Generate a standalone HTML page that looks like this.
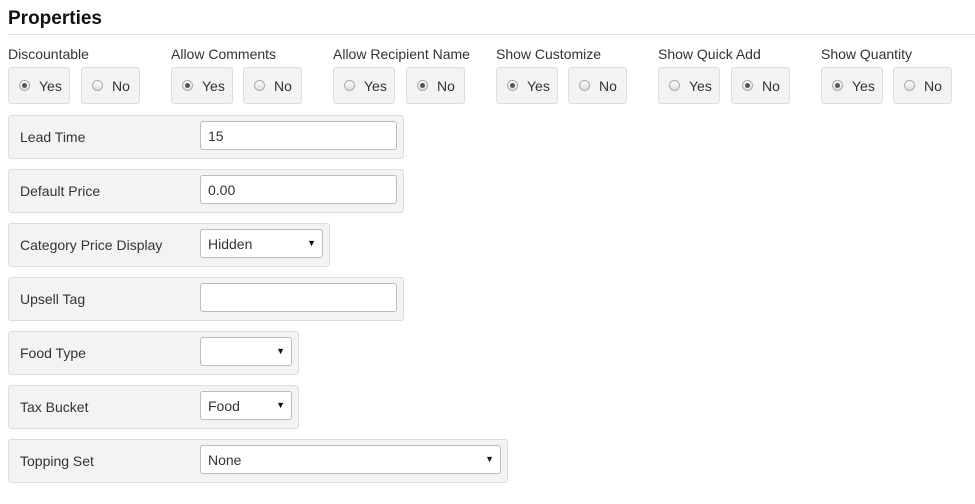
<!DOCTYPE html><html><head><style>
body{margin:0;background:#fff;font-family:"Liberation Sans",sans-serif;color:#333;font-size:14px;position:relative;width:975px;height:504px;overflow:hidden}
.a{position:absolute}
h1{position:absolute;left:8px;top:8px;margin:0;font-size:19px;font-weight:bold;color:#111}
.hr{left:8px;top:34px;width:967px;height:1px;background:#ddd}
.lbl{font-size:14px}
.rb{background:#f3f3f3;border:1px solid #ddd;border-radius:3px;height:37px;top:67px;box-sizing:border-box;display:flex;align-items:center;padding-left:10px}
.r{width:11px;height:11px;border-radius:50%;border:1px solid #aaa;background:linear-gradient(#fff,#ddd);margin-right:9px;box-sizing:border-box;position:relative}
.r.on:after{content:"";position:absolute;left:2px;top:2px;width:5px;height:5px;border-radius:50%;background:#555}
.row{left:8px;height:44px;background:#f3f3f3;border:1px solid #ddd;border-radius:3px;box-sizing:border-box}
.row span{position:absolute;left:11px;top:13px}
.in{position:absolute;left:191px;top:5px;height:29px;background:#fff;border:1px solid #bbb;border-radius:3px;box-sizing:border-box;padding:6px 0 0 7px}
.sel:after{content:"▼";position:absolute;right:6px;top:8px;font-size:9px;color:#111}
</style></head><body>
<h1>Properties</h1>
<div class="a hr"></div>
<div class="a lbl" style="left:8px;top:46px">Discountable</div>
<div class="a lbl" style="left:171px;top:46px">Allow Comments</div>
<div class="a lbl" style="left:333px;top:46px">Allow Recipient Name</div>
<div class="a lbl" style="left:496px;top:46px">Show Customize</div>
<div class="a lbl" style="left:658px;top:46px">Show Quick Add</div>
<div class="a lbl" style="left:821px;top:46px">Show Quantity</div>

<div class="a rb" style="left:8px;width:62px"><i class="r on"></i>Yes</div>
<div class="a rb" style="left:81px;width:59px"><i class="r"></i>No</div>
<div class="a rb" style="left:171px;width:62px"><i class="r on"></i>Yes</div>
<div class="a rb" style="left:243px;width:59px"><i class="r"></i>No</div>
<div class="a rb" style="left:333px;width:62px"><i class="r"></i>Yes</div>
<div class="a rb" style="left:406px;width:59px"><i class="r on"></i>No</div>
<div class="a rb" style="left:496px;width:62px"><i class="r on"></i>Yes</div>
<div class="a rb" style="left:568px;width:59px"><i class="r"></i>No</div>
<div class="a rb" style="left:658px;width:62px"><i class="r"></i>Yes</div>
<div class="a rb" style="left:731px;width:59px"><i class="r on"></i>No</div>
<div class="a rb" style="left:821px;width:62px"><i class="r on"></i>Yes</div>
<div class="a rb" style="left:893px;width:59px"><i class="r"></i>No</div>

<div class="a row" style="top:115px;width:396px"><span>Lead Time</span><div class="in" style="width:197px">15</div></div>
<div class="a row" style="top:169px;width:396px"><span>Default Price</span><div class="in" style="width:197px">0.00</div></div>
<div class="a row" style="top:223px;width:322px"><span>Category Price Display</span><div class="in sel" style="width:123px">Hidden</div></div>
<div class="a row" style="top:277px;width:396px"><span>Upsell Tag</span><div class="in" style="width:197px"></div></div>
<div class="a row" style="top:331px;width:291px"><span>Food Type</span><div class="in sel" style="width:92px"></div></div>
<div class="a row" style="top:385px;width:291px"><span>Tax Bucket</span><div class="in sel" style="width:92px">Food</div></div>
<div class="a row" style="top:439px;width:500px"><span>Topping Set</span><div class="in sel" style="width:301px">None</div></div>
</body></html>
